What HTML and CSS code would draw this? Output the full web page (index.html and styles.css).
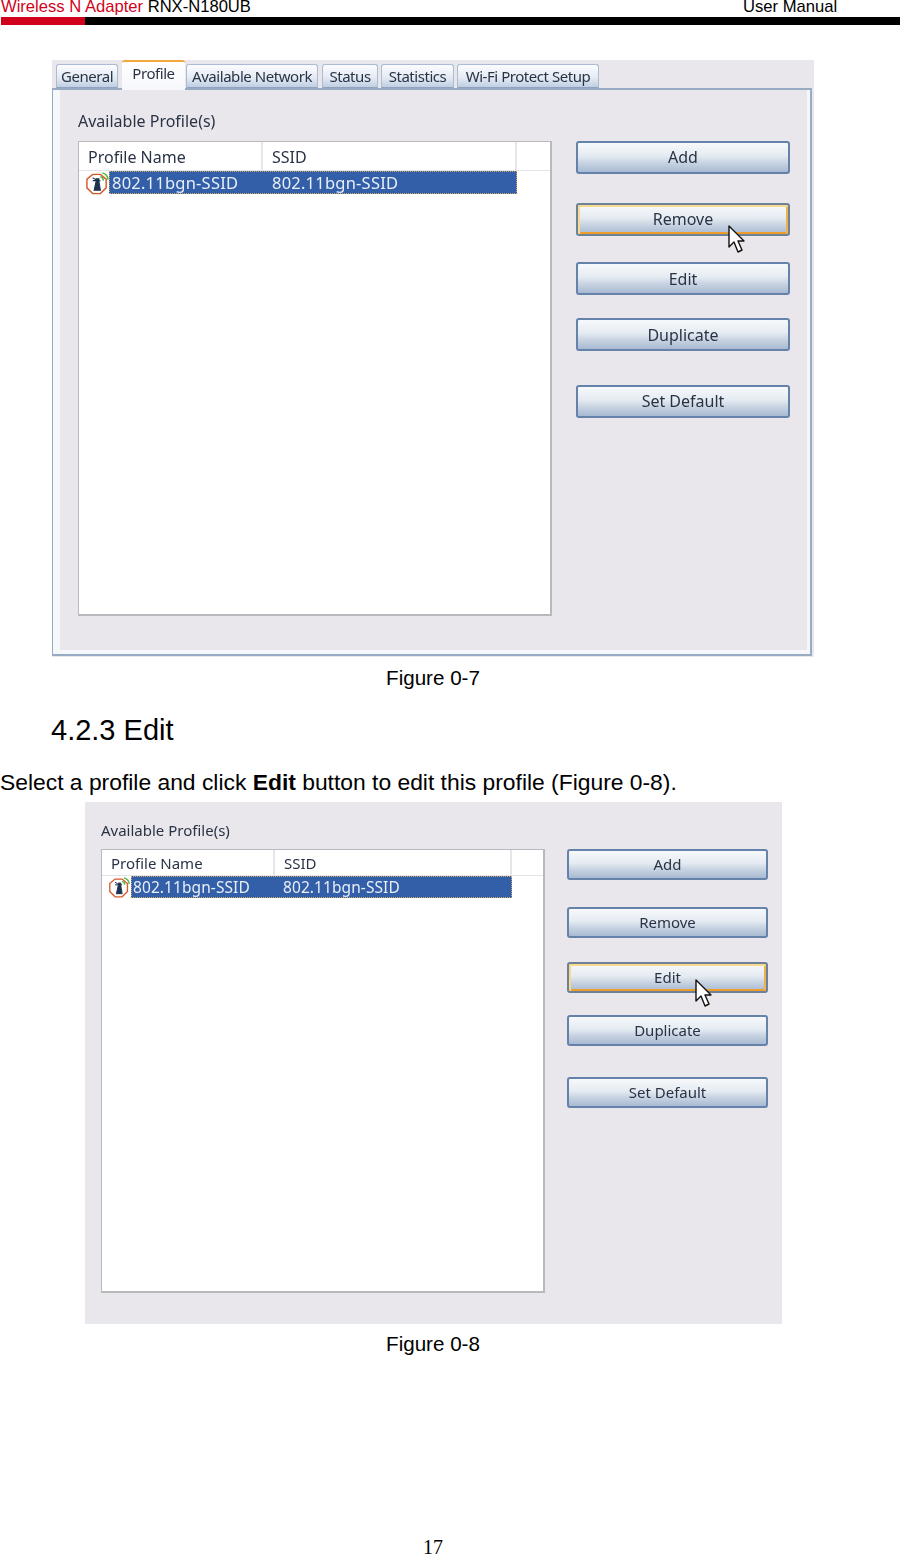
FILE: index.html
```html
<!DOCTYPE html>
<html>
<head>
    <meta charset="utf-8">
    <meta name="viewport" content="width=device-width, initial-scale=1">
    <title>Wireless N Adapter RNX-N180UB User Manual</title>
    <link rel="stylesheet" href="styles.css">
</head>
<body>
<div class="page">
    <div class="top">
        <div class="top-title"><span class="red">Wireless N Adapter</span> RNX-N180UB</div>
        <div class="top-right">User Manual</div>
    </div>
    <div class="rule"><div class="rule-red"></div></div>

    <div class="dialog">
        <div class="tabs">
            <div class="tab tab-general">General</div>
            <div class="tab tab-profile">Profile</div>
            <div class="tab tab-network">Available Network</div>
            <div class="tab tab-status">Status</div>
            <div class="tab tab-stats">Statistics</div>
            <div class="tab tab-wps">Wi-Fi Protect Setup</div>
        </div>
        <div class="panel">
            <div class="label">Available Profile(s)</div>
            <div class="columns">
                <div class="list">
                    <div class="list-head">
                        <div class="col col-name">Profile Name</div>
                        <div class="col col-ssid">SSID</div>
                    </div>
                    <div class="list-row">
                        <svg class="net-icon" viewBox="0 0 26 26">
                            <path d="M8 3.5h8l6 5v9l-6 6H8l-6-6v-9z" fill="#fff" stroke="#d8592a" stroke-width="1.5"/>
                            <path d="M11.500 8h3v3l1.500 9H9.500l2-9zM8 7l3 2M8 10h8" fill="#1f3350" stroke="#1f3350" stroke-width="1.1"/>
                            <path d="M16 6a4 4 0 0 1 3 4M18 2a8 8 0 0 1 6 7" fill="none" stroke="#4db53c" stroke-width="1.500"/>
                        </svg>
                        <div class="selected">
                            <div class="cell-name">802.11bgn-SSID</div>
                            <div class="cell-ssid">802.11bgn-SSID</div>
                        </div>
                    </div>
                </div>
                <div class="buttons">
                    <div class="btn">Add</div>
                    <div class="btn btn-hot btn-remove">Remove
                        <svg class="cursor" viewBox="0 0 17 29"><path d="M1 1v21l5-5 4 10 4-2-4-9h6z" fill="#fff" stroke="#111" stroke-width="1.4" stroke-linejoin="round"/></svg>
                    </div>
                    <div class="btn btn-edit">Edit</div>
                    <div class="btn btn-dup">Duplicate</div>
                    <div class="btn btn-set">Set Default</div>
                </div>
            </div>
        </div>
    </div>
    <div class="caption">Figure 0-7</div>

    <h2 class="section">4.2.3 Edit</h2>
    <p class="intro">Select a profile and click <b>Edit</b> button to edit this profile (Figure 0-8).</p>

    <div class="dialog2">
        <div class="label">Available Profile(s)</div>
        <div class="columns">
            <div class="list">
                <div class="list-head">
                    <div class="col col-name">Profile Name</div>
                    <div class="col col-ssid">SSID</div>
                </div>
                <div class="list-row">
                    <svg class="net-icon" viewBox="0 0 26 26">
                        <path d="M8 3.5h8l6 5v9l-6 6H8l-6-6v-9z" fill="#fff" stroke="#d8592a" stroke-width="1.5"/>
                        <path d="M11.500 8h3v3l1.500 9H9.500l2-9zM8 7l3 2M8 10h8" fill="#1f3350" stroke="#1f3350" stroke-width="1.1"/>
                        <path d="M16 6a4 4 0 0 1 3 4M18 2a8 8 0 0 1 6 7" fill="none" stroke="#4db53c" stroke-width="1.500"/>
                    </svg>
                    <div class="selected">
                        <div class="cell-name">802.11bgn-SSID</div>
                        <div class="cell-ssid">802.11bgn-SSID</div>
                    </div>
                </div>
            </div>
            <div class="buttons">
                <div class="btn">Add</div>
                <div class="btn btn-remove">Remove</div>
                <div class="btn btn-hot btn-edit">Edit
                    <svg class="cursor" viewBox="0 0 17 29"><path d="M1 1v21l5-5 4 10 4-2-4-9h6z" fill="#fff" stroke="#111" stroke-width="1.4" stroke-linejoin="round"/></svg>
                </div>
                <div class="btn btn-dup">Duplicate</div>
                <div class="btn btn-set">Set Default</div>
            </div>
        </div>
    </div>
    <div class="caption caption2">Figure 0-8</div>

    <div class="page-no">17</div>
</div>
</body>
</html>
```

FILE: styles.css
```css
body {
    margin: 0;
    background: #fff;
    color: #000;
    font-family: "Liberation Sans", Arial, sans-serif;
}

.page {
    width: 900px;
    height: 1554px;
    overflow: hidden;
}

.top {
    display: flex;
    height: 17px;
    font-size: 16.6px;
    line-height: 13px;
}

.top-title {
    width: 743px;
    padding-left: 1px;
    box-sizing: border-box;
}

.red {
    color: #d0021b;
}

.rule {
    height: 8px;
    background: #000;
    margin-left: 1px;
}

.rule-red {
    width: 84px;
    height: 8px;
    background: #d0021b;
}

/* first screenshot */
.dialog {
    width: 762px;
    height: 597px;
    margin: 35px 0 0 52px;
    background: #e9e7eb;
    font-family: "Noto Sans", sans-serif;
    color: #2a3346;
    filter: blur(0.35px);
}

.tabs {
    display: flex;
    height: 28px;
    align-items: flex-end;
    padding-left: 4px;
    position: relative;
    z-index: 1;
}

.tab {
    height: 24px;
    box-sizing: border-box;
    border: 1px solid #a9bcd3;
    border-bottom: 1px solid #8fa3bc;
    border-radius: 3px 3px 0 0;
    background: linear-gradient(#fbfcfe, #e6ecf5 55%, #c0cfe2);
    font-size: 15px;
    letter-spacing: -0.45px;
    line-height: 22px;
    text-align: center;
    white-space: nowrap;
}

.tab-general { width: 62px; margin-right: 4px; }
.tab-profile {
    width: 63px;
    height: 30px;
    margin-right: 1px;
    margin-bottom: -2px;
    border: none;
    border-top: 2px solid #f3a73c;
    background: linear-gradient(#fff, #f6f7fb);
    line-height: 23px;
}
.tab-network { width: 132px; margin-right: 4px; }
.tab-status { width: 56px; margin-right: 3px; }
.tab-stats { width: 73px; margin-right: 3px; }
.tab-wps { width: 142px; }

.panel {
    width: 760px;
    height: 568px;
    box-sizing: border-box;
    border: 2px solid #97acc4;
    border-left-width: 1px;
    background: #e9e7eb;
    box-shadow: inset 7px 0 0 #f5f7fb, inset -3px 0 0 #f5f7fb, inset 0 -4px 0 #f5f7fb;
    padding: 20px 0 0 25px;
}

.label {
    font-size: 16px;
    line-height: 22px;
}

.columns {
    display: flex;
}

.panel .columns {
    margin-top: 9px;
}

.list {
    box-sizing: border-box;
    border: 2px solid #b9b9bd;
    border-width: 1px 2px 2px 1px;
    background: #fff;
}

.panel .list {
    width: 474px;
    height: 475px;
    margin-right: 24px;
}

.list-head {
    display: flex;
    height: 28px;
    border-bottom: 1px solid #e4e4e6;
    font-size: 16px;
    line-height: 30px;
}

.col {
    border-right: 2px solid #e6e6e8;
    box-sizing: border-box;
    padding-left: 9px;
}

.panel .col-name { width: 184px; }
.panel .col-ssid { width: 254px; }

.list-row {
    display: flex;
    height: 24px;
    margin-left: 6px;
}

.net-icon {
    flex: none;
    width: 25px;
    height: 25px;
}

.selected {
    display: flex;
    height: 23px;
    box-sizing: border-box;
    background: #335fa8;
    outline: 1px dotted #c9a86a;
    outline-offset: -1px;
    color: #e8eef8;
    font-size: 16.5px;
    letter-spacing: 0.22px;
    line-height: 23px;
    white-space: nowrap;
}

.panel .selected { width: 408px; margin-left: -1px; }
.panel .cell-name { width: 163px; padding-left: 3px; box-sizing: border-box; }

.buttons {
    display: flex;
    flex-direction: column;
}

.btn {
    position: relative;
    box-sizing: border-box;
    border: 2px solid #6582ab;
    border-radius: 3px;
    background: linear-gradient(#f7f9fb, #e4ebf1 45%, #c6d2e1 70%, #a8bad2);
    text-align: center;
    font-size: 16px;
    white-space: nowrap;
}

.btn-hot {
    border-color: #6d8299;
    box-shadow: inset 0 2px 0 #f7da8e, inset 2px 0 0 #f7da8e, inset -2px 0 0 #f0b04c, inset 0 -2px 0 #ee9c2a;
}

.panel .btn {
    width: 214px;
    height: 33px;
    line-height: 28px;
}

.panel .btn-remove { margin-top: 29px; }
.panel .btn-edit { margin-top: 26px; line-height: 30px; }
.panel .btn-dup { margin-top: 23px; line-height: 30px; }
.panel .btn-set { margin-top: 34px; }

.cursor {
    position: absolute;
    width: 17px;
    height: 29px;
}

.panel .cursor { left: 150px; top: 20px; }

.caption {
    width: 866px;
    margin-top: 9px;
    text-align: center;
    font-size: 20.6px;
    line-height: 24px;
}

.section {
    margin: 23px 0 0 51px;
    font-size: 29px;
    font-weight: normal;
    line-height: 34px;
}

.intro {
    margin: 22px 0 0 0;
    font-size: 22.85px;
    line-height: 26px;
}

/* second screenshot */
.dialog2 {
    width: 697px;
    height: 522px;
    box-sizing: border-box;
    margin: 7px 0 0 85px;
    padding: 18px 0 0 16px;
    background: #e9e7eb;
    font-family: "Noto Sans", sans-serif;
    color: #2a3346;
    filter: blur(0.35px);
}

.dialog2 .label {
    font-size: 15px;
    line-height: 20px;
}

.dialog2 .columns {
    margin-top: 9px;
}

.dialog2 .list {
    width: 444px;
    height: 444px;
    margin-right: 22px;
}

.dialog2 .list-head {
    height: 25px;
    font-size: 15px;
    line-height: 27px;
}

.dialog2 .col-name { width: 173px; }
.dialog2 .col-ssid { width: 237px; }

.dialog2 .list-row {
    height: 23px;
    margin-left: 6px;
}

.dialog2 .net-icon {
    width: 23px;
    height: 23px;
}

.dialog2 .selected {
    width: 381px;
    height: 22px;
    font-size: 15.5px;
    letter-spacing: 0.08px;
    line-height: 22px;
}

.dialog2 .cell-name { width: 152px; padding-left: 2px; box-sizing: border-box; }

.dialog2 .btn {
    width: 201px;
    height: 31px;
    line-height: 26px;
    font-size: 15px;
}

.dialog2 .btn-remove { margin-top: 27px; }
.dialog2 .btn-edit { margin-top: 24px; }
.dialog2 .btn-dup { margin-top: 22px; }
.dialog2 .btn-set { margin-top: 31px; }
.dialog2 .cursor { left: 126px; top: 15px; }

.caption2 {
    margin-top: 8px;
}

.page-no {
    width: 866px;
    margin-top: 179px;
    text-align: center;
    font-family: "Liberation Serif", serif;
    font-size: 20px;
    line-height: 24px;
}
```
